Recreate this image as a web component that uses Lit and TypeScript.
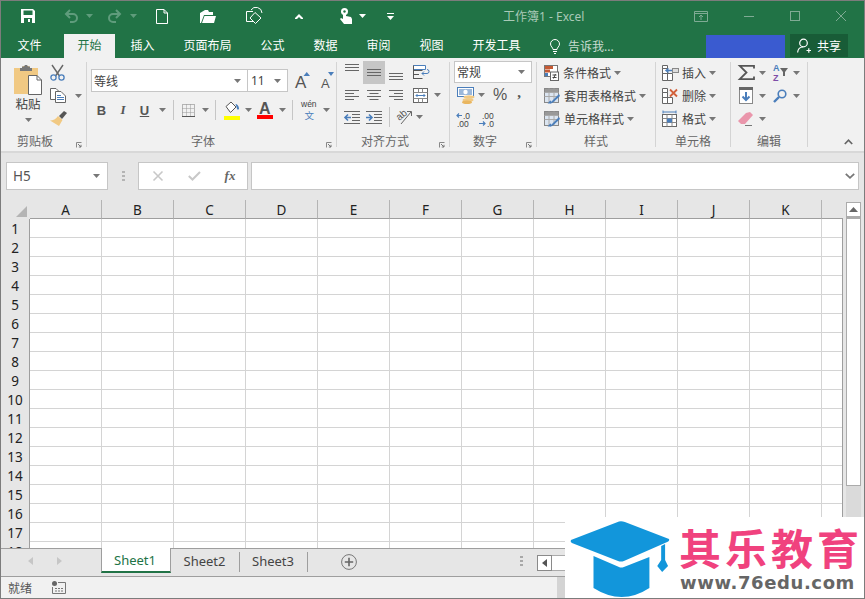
import { LitElement, html, css, svg } from "lit";
import { customElement } from "lit/decorators.js";

const ic = (w: number, h: number, body: unknown) =>
  html`<svg class="ic" width=${w} height=${h} viewBox="0 0 ${w} ${h}">${body}</svg>`;
const caret = (c = "#777") => ic(7, 4, svg`<polygon points="0,0 7,0 3.5,4" fill=${c}/>`);
const BL = "#4a7ebb";
const ln = (x1: number, y: number, x2: number, c = "#666") =>
  svg`<line x1=${x1} y1=${y} x2=${x2} y2=${y} stroke=${c} stroke-width="1"/>`;
const sp = html`<span></span>`;
const sep = html`<b class="vsep"></b>`;
const DIM = "#5f9c7c";

const I = {
  save: ic(14, 14, svg`<path d="M0 0H12L14 2V14H0Z" fill="#fff"/><rect x="2.5" y="1.5" width="9" height="4.5" fill="#217346"/><rect x="3" y="9" width="8" height="5" fill="#217346"/><rect x="7" y="10" width="2" height="3" fill="#fff"/>`),
  undo: ic(14, 14, svg`<path d="M6 1 L2 5 L6 9 M2 5 H9 A4 4 0 0 1 9 13 H6" fill="none" stroke=${DIM} stroke-width="2"/>`),
  redo: ic(14, 14, svg`<path d="M8 1 L12 5 L8 9 M12 5 H5 A4 4 0 0 0 5 13 H8" fill="none" stroke=${DIM} stroke-width="2"/>`),
  doc: ic(12, 15, svg`<path d="M.5 .5H8L11.5 4V14.5H.5Z M8 .5V4H11.5" fill="none" stroke="#fff"/>`),
  open: ic(16, 13, svg`<path d="M0 3 L5 0 H8 L9 2 H13 V5 H4 L1 13 H0Z" fill="#fff"/><path d="M4.5 6 H16 L14 13 H2Z" fill="#fff"/>`),
  touchMode: ic(17, 15, svg`<path d="M7 12.5H.5V2.5H7 M5 1 A6 6 0 0 1 16 4" fill="none" stroke="#fff"/><path d="M9 3.5 L15 9 L9.5 14.5 L4 9Z" fill="none" stroke="#fff"/>`),
  up: ic(8, 5, svg`<polygon points="4,0 8,4 8,5 6,5 4,3 2,5 0,5 0,4" fill="#fff"/>`),
  hand: ic(12, 16, svg`<circle cx="4.5" cy="3.5" r="3.5" fill="#fff"/><path d="M3 3 H6 V8 L11 9 L12 11 V16 H4 L0 11 L1 10 L3 11Z" fill="#fff"/><circle cx="4.5" cy="3.5" r="1.2" fill="#217346"/>`),
  more: ic(7, 7, svg`<rect width="7" height="1" fill="#fff"/><polygon points="0,3 7,3 3.5,7" fill="#fff"/>`),
  rest: ic(14, 11, svg`<path d="M.5 .5H13.5V10.5H.5Z M.5 2.5H13.5 M7 9V4 M5 6L7 4L9 6" fill="none" stroke="#7fab94"/>`),
  min: ic(10, 10, svg`<line x1="0" y1="5.5" x2="10" y2="5.5" stroke="#7fab94"/>`),
  max: ic(10, 10, svg`<rect x=".5" y=".5" width="9" height="9" fill="none" stroke="#7fab94"/>`),
  close: ic(10, 10, svg`<path d="M0 0L10 10M10 0L0 10" stroke="#7fab94"/>`),
  bulb: ic(10, 15, svg`<path d="M3 10.5C3 8.5 .5 7.5 .5 5A4.5 4.5 0 0 1 9.5 5C9.5 7.5 7 8.5 7 10.5Z M3 12.5H7 M4 14.5H6" fill="none" stroke="#fff"/>`),
  person: ic(14, 15, svg`<circle cx="6.5" cy="5" r="3.8" fill="none" stroke="#fff" stroke-width="1.2"/><path d="M.6 14.5C1 10.5 3.5 9 6 9 M9.5 12.5H14 M11.8 10.2V14.8" fill="none" stroke="#fff" stroke-width="1.2"/>`),
  paste: ic(28, 30, svg`<path d="M0 3H8L9 1H15L16 3H24V29H0Z" fill="#f1c983"/><path d="M6 3H8V1.5H10L11 0H13L14 1.5H16V3H18V6H6Z" fill="#777"/><path d="M14.5 10.5H23L27.5 15V29.5H14.5Z" fill="#fff" stroke="#666"/><path d="M23 10.5V15H27.5" fill="none" stroke="#666"/>`),
  cut: ic(15, 16, svg`<path d="M2 0L9.5 11 M13 0L5.5 11" stroke="#666" stroke-width="1.4"/><circle cx="3.5" cy="12.5" r="2.6" fill="none" stroke=${BL} stroke-width="1.3"/><circle cx="11.5" cy="12.5" r="2.6" fill="none" stroke=${BL} stroke-width="1.3"/>`),
  copy: ic(16, 15, svg`<path d="M.5 .5H6L8.5 3V11.5H.5Z" fill="#fff" stroke="#666"/><path d="M5.5 3.5H11L15.5 8V14.5H5.5Z" fill="#fff" stroke="#666"/><path d="M7 7.5H11 M7 9.5H14 M7 11.5H14" stroke=${BL}/>`),
  brush: ic(17, 15, svg`<path d="M9 5L14 0L17 2L12 8Z" fill="#555"/><path d="M8 5L12.5 9L9 15L0 9.5C3 9.5 6 8 8 5Z" fill="#f1c983"/>`),
  launcher: ic(6, 6, svg`<path d="M.5 5.5V.5H5.5" fill="none" stroke="#888"/><path d="M2 2L5 5M5 2.8V5H2.8" fill="none" stroke="#777"/>`),
  incA: html`<svg class="ic" width="16" height="18" viewBox="0 0 16 18"><text x="0" y="16" class="fa big">A</text><polygon points="8.5,4 15,4 11.75,0" fill=${BL}/></svg>`,
  decA: html`<svg class="ic" width="14" height="18" viewBox="0 0 14 18"><text x="0" y="16" class="fa small">A</text><polygon points="7,0 13,0 10,4" fill=${BL}/></svg>`,
  border: ic(13, 13, svg`<rect x=".5" y=".5" width="12" height="12" fill="none" stroke="#777" stroke-dasharray="1 1"/><path d="M.5 4.5H12.5M.5 8.5H12.5M4.5 .5V12.5M8.5 .5V12.5" stroke="#999" stroke-dasharray="1 1"/><line x1="0" y1="12.5" x2="13" y2="12.5" stroke="#555"/>`),
  fill: ic(16, 19, svg`<path d="M2 5.5L7 1L12 6L6.5 11.5Z" fill="#fff" stroke="#555"/><path d="M11.5 3C13 3 15 5 15 7.5C15 9 13 9 13 7.5Z" fill=${BL}/><rect y="15" width="16" height="4" fill="#ffff00"/>`),
  fontA: html`<svg class="ic" width="16" height="20" viewBox="0 0 16 20"><text x="2" y="14" class="fa big2">A</text><rect y="15" width="16" height="4" fill="#f00"/></svg>`,
  wen: html`<svg class="ic" width="16" height="18" viewBox="0 0 16 18"><text x="0" y="6" class="wen">wén</text><text x="3.5" y="17.5" class="wenz">文</text></svg>`,
  aTop: ic(14, 23, svg`${ln(0, 3.5, 14)}${ln(0, 6.5, 14)}${ln(0, 9.5, 14)}`),
  aMid: ic(14, 23, svg`${ln(0, 8.5, 14)}${ln(0, 11.5, 14)}${ln(0, 14.5, 14)}`),
  aBot: ic(14, 23, svg`${ln(0, 12.5, 14)}${ln(0, 15.5, 14)}${ln(0, 18.5, 14)}`),
  wrap: ic(17, 15, svg`<path d="M.5 .5H12.5V4.5H.5Z" fill="#fff" stroke=${BL}/><path d="M.5 5.5H9.5 M.5 9.5H6 M.5 13.5H9.5 M.5 .5V14" fill="none" stroke="#555"/><path d="M9 8.5H14A2 2 0 0 0 14 4.5 M11 6.5L9 8.5L11 10.5" fill="none" stroke=${BL}/>`),
  left: ic(14, 11, svg`${ln(0, .5, 14)}${ln(0, 3.5, 9)}${ln(0, 6.5, 14)}${ln(0, 9.5, 9)}`),
  center: ic(14, 11, svg`${ln(0, .5, 14)}${ln(2.5, 3.5, 11.5)}${ln(0, 6.5, 14)}${ln(2.5, 9.5, 11.5)}`),
  right: ic(14, 11, svg`${ln(0, .5, 14)}${ln(5, 3.5, 14)}${ln(0, 6.5, 14)}${ln(5, 9.5, 14)}`),
  merge: ic(15, 15, svg`<rect x=".5" y=".5" width="14" height="14" fill="#fff" stroke="#666"/><path d="M.5 4.5H14.5M.5 10.5H14.5" stroke="#888"/><path d="M5.5 .5V4.5M9.5 .5V4.5M5.5 10.5V14.5M9.5 10.5V14.5" stroke="#888"/><path d="M3 7.5H12M4.5 6L3 7.5L4.5 9M10.5 6L12 7.5L10.5 9" fill="none" stroke=${BL}/>`),
  indDec: ic(16, 13, svg`${ln(0, .5, 16)}${ln(8, 3.5, 16)}${ln(8, 6.5, 16)}${ln(8, 9.5, 16)}${ln(0, 12.5, 16)}<path d="M1 6.5H7 M4 3.5L1 6.5L4 9.5" fill="none" stroke=${BL} stroke-width="1.6"/>`),
  indInc: ic(16, 13, svg`${ln(0, .5, 16)}${ln(8, 3.5, 16)}${ln(8, 6.5, 16)}${ln(8, 9.5, 16)}${ln(0, 12.5, 16)}<path d="M0 6.5H6 M3 3.5L6 6.5L3 9.5" fill="none" stroke=${BL} stroke-width="1.6"/>`),
  orient: html`<svg class="ic" width="17" height="16" viewBox="0 0 17 16"><text x="1" y="10" class="orient" transform="rotate(-40 5 8)">ab</text><path d="M5 15L15 3M11 2.5H15.5V7" fill="none" stroke="#666"/></svg>`,
  currency: ic(18, 17, svg`<rect x=".5" y=".5" width="16" height="9" fill="#fff" stroke=${BL} stroke-width="1"/><rect x="2" y="2" width="13" height="6" fill=${BL} opacity=".55"/><circle cx="8.5" cy="5" r="2.2" fill="#fff"/><ellipse cx="12" cy="10" rx="5.5" ry="1.8" fill="#f1c983"/><ellipse cx="11" cy="13" rx="5.5" ry="1.8" fill="#f1c983"/><ellipse cx="10" cy="15.2" rx="5" ry="1.8" fill="#e9b660"/>`),
  decInc: html`<svg class="ic" width="16" height="15" viewBox="0 0 16 15"><text x="6" y="6.5" class="num">.0</text><text x="0" y="15" class="num">.00</text><path d="M0 3.5H5M2 1.5L0 3.5L2 5.5" fill="none" stroke=${BL} stroke-width="1.2"/></svg>`,
  decDec: html`<svg class="ic" width="16" height="15" viewBox="0 0 16 15"><text x="3" y="6.5" class="num">.00</text><text x="8" y="15" class="num">.0</text><path d="M0 11.5H6M4 9.5L6 11.5L4 13.5" fill="none" stroke=${BL} stroke-width="1.2"/></svg>`,
  cond: ic(15, 16, svg`<rect x=".5" y=".5" width="13" height="11" fill="#fff" stroke="#777"/><rect x="1" y="1" width="8" height="3" fill="#c55a34"/><rect x="1" y="4.5" width="5" height="3" fill="#c55a34"/><rect x="1" y="8" width="3" height="3" fill="#4a7ebb"/><rect x="6.5" y="7" width="8" height="8.5" fill="#fff" stroke="#666"/><path d="M8.5 10H12.5M8.5 12.5H12.5M11.5 9L9.5 13.5" stroke="#444"/>`),
  tablef: ic(16, 16, svg`<rect x=".5" y=".5" width="14" height="14" fill="#dbe5f1" stroke="#888"/><path d="M.5 4.5H14.5M.5 8.5H14.5M5 .5V14.5M10 .5V14.5" stroke="#aaa"/><rect x="1" y="1" width="13" height="3" fill="#999"/><path d="M15 6L8 13L6 15.5L9 14.5L16 8Z" fill=${BL}/><path d="M7 12.5C5 12.5 5 15 3.5 15.5H7.5Z" fill=${BL}/>`),
  cins: ic(17, 16, svg`<path d="M.5 3.5H5.5V8.5H.5Z M.5 8.5H5.5V15.5H.5Z M5.5 8.5H10.5V15.5H5.5Z M.5 .5H5.5V3.5H.5Z" fill="#fff" stroke="#666"/><rect x="10.5" y="3.5" width="6" height="4" fill="#ddd" stroke="#888"/><path d="M4 5.5H10M6.5 3.5L4 5.5L6.5 7.5" fill="none" stroke=${BL} stroke-width="1.4"/>`),
  cdel: ic(17, 16, svg`<path d="M.5 .5H5.5V4.5H.5Z M.5 4.5H5.5V9.5H.5Z M.5 9.5H5.5V15.5H.5Z M5.5 9.5H10.5V15.5H5.5Z" fill="#fff" stroke="#666"/><path d="M8 1.5L15 8.5M15 1.5L8 8.5" stroke="#d2603a" stroke-width="1.8"/>`),
  cfmt: ic(17, 17, svg`<rect x=".5" y="4.5" width="14" height="12" fill="#fff" stroke="#666"/><path d="M.5 8.5H14.5M.5 12.5H14.5M5 4.5V16.5M10 4.5V16.5" stroke="#888"/><rect x="5" y="8.5" width="5" height="4" fill=${BL}/><path d="M1 2H14M1 .5V3.5M14 .5V3.5" fill="none" stroke=${BL}/>`),
  sum: ic(15, 15, svg`<path d="M15 3.5V.8H.8L7.5 7.5L.8 14.2H15V11.5" fill="none" stroke="#555" stroke-width="1.8"/>`),
  sort: html`<svg class="ic" width="15" height="17" viewBox="0 0 15 17"><text x="0" y="7" class="az az1">A</text><text x="0" y="17" class="az az2">Z</text><polygon points="7,4 15,4 12,8 12,12 10,12 10,8" fill="#666"/></svg>`,
  down: ic(14, 17, svg`<rect x=".5" y=".5" width="13" height="16" fill="#fff" stroke="#888"/><rect width="14" height="3" fill="#666"/><path d="M7 5V13M3.5 9.5L7 13L10.5 9.5" fill="none" stroke=${BL} stroke-width="2"/>`),
  find: ic(14, 14, svg`<circle cx="9" cy="5" r="3.8" fill="none" stroke=${BL} stroke-width="1.6"/><line x1="6" y1="8" x2="1" y2="13" stroke=${BL} stroke-width="2.4"/>`),
  eraser: ic(17, 14, svg`<path d="M0 9L8 1L12 0L15 3L7 12H3Z" fill="#ea96ab"/><line x1="7" y1="13.5" x2="14" y2="13.5" stroke="#777"/>`),
  collapse: ic(9, 6, svg`<path d="M.8 5L4.5 1.2L8.2 5" fill="none" stroke="#666" stroke-width="1.7"/>`),
  cx: ic(10, 10, svg`<path d="M.5 .5L9.5 9.5M9.5 .5L.5 9.5" stroke="#c8c8c8" stroke-width="1.6"/>`),
  ck: ic(13, 10, svg`<path d="M.8 5L4.5 8.5L12 1" fill="none" stroke="#c8c8c8" stroke-width="2"/>`),
  chev: ic(10, 6, svg`<path d="M.8 .8L5 4.8L9.2 .8" fill="none" stroke="#777" stroke-width="1.8"/>`),
  navL: ic(5, 8, svg`<polygon points="5,0 5,8 0,4" fill="#c6c6c6"/>`),
  navR: ic(5, 8, svg`<polygon points="0,0 0,8 5,4" fill="#c6c6c6"/>`),
  plus: ic(16, 16, svg`<circle cx="8" cy="8" r="7.4" fill="none" stroke="#777"/><path d="M8 3.8V12.2M3.8 8H12.2" stroke="#666" stroke-width="1.6"/>`),
  status: ic(14, 13, svg`<circle cx="2.5" cy="2.5" r="2.5" fill="#666"/><path d="M6 1.5H13.5V12.5H.5V6" fill="none" stroke="#777"/><path d="M3 7.5H12M3 10H12" stroke="#777" stroke-dasharray="2 1"/>`),
  tri: ic(5, 8, svg`<polygon points="5,0 5,8 0,4" fill="#555"/>`),
  triUp: ic(9, 5, svg`<polygon points="0,5 9,5 4.5,0" fill="#666"/>`),
  corner: ic(12, 12, svg`<polygon points="12,1 12,12 1,12" fill="#b4b4b4"/>`),
  hat: html`<svg class="ic" width="102" height="79" viewBox="0 0 104 79" preserveAspectRatio="none"><path d="M3 23L52 4.5Q55 4 58 5L103 22Q104 24 100 25.5L57 44Q54 45 51 44L4 26Q2 25 3 23Z" fill="#1296db"/><path d="M26 39L52 50Q54 51 57 50L83 40V71Q55 89 26 71Z" fill="#1296db"/><path d="M97 28L99 27V43L102 49L96 55L91 49L95 43V29Z" fill="#1296db"/></svg>`,
};

const COLS = ["A", "B", "C", "D", "E", "F", "G", "H", "I", "J", "K"];
const ROWS = Array.from({ length: 18 }, (_, i) => i + 1);
const CELLCOLS = Array.from({ length: 12 }, (_, i) => i);

@customElement("app-root")
export class AppRoot extends LitElement {
  static styles = css`
    :host { display: block; width: 865px; height: 599px; box-sizing: border-box; border: 1px solid #7c7c7c; overflow: hidden; position: relative;
      font-family: "Noto Sans", "Noto Sans CJK SC", sans-serif; font-size: 12px; color: #444; background: #e6e6e6; }
    * { box-sizing: border-box; }
    .app { display: flex; flex-direction: column; height: 100%; }
    .ic { display: block; flex: none; overflow: visible; }
    .title { display: flex; align-items: center; height: 33px; padding-bottom: 3px; background: #217346; flex: none; }
    .qat { display: grid; align-items: center; grid-template-columns: 20px 14px 29px 14px 8px 7px 15px 14px 8px 7px 19px 12px 32px 16px 30px 17px 32px 8px 37px 12px 7px 7px 21px 7px; }
    .doctitle { margin-left: 109px; color: #a9c9b7; font-size: 12px; white-space: pre; }
    .win { margin-left: auto; display: flex; align-items: center; gap: 36px; padding-right: 18px; }
    .tabs { display: flex; height: 24px; background: #217346; flex: none; padding-left: 3px; color: #fff; }
    .tab { width: 51px; text-align: center; line-height: 23px; flex: none; margin-right: 2px; }
    .tab.w { width: 75px; }
    .tab.file { margin-right: 9px; }
    .tab.on { background: #f1f1f1; color: #217346; }
    .help { display: flex; align-items: center; gap: 8px; margin-left: 14px; color: #c8dcd1; }
    .acct { margin-left: auto; width: 79px; height: 23px; align-self: flex-end; background: #3a5bd0; }
    .share { display: flex; align-items: center; gap: 6px; width: 58px; height: 23px; margin: 0 16px 0 5px; padding-left: 7px; background: #185c37; color: #fff; }
    .ribbon { display: flex; height: 95px; flex: none; background: #f1f1f1; border-bottom: 2px solid #d8d8d8; }
    .g { display: flex; flex-direction: column; flex: none; height: 93px; position: relative; }
    .g::after { content: ""; position: absolute; right: 0; top: 4px; bottom: 4px; width: 1px; background: #d4d4d4; }
    .gb { height: 75px; flex: none; }
    .gl { height: 18px; display: flex; align-items: center; color: #666; line-height: 16px; }
    .gl .ic { margin-left: auto; margin-right: 5px; margin-top: 5px; }
    .g1 { width: 86px; } .g1 .gl { padding-left: 16px; }
    .g2 { width: 250px; } .g2 .gl { padding-left: 104px; }
    .g3 { width: 113px; } .g3 .gl { padding-left: 24px; }
    .g4 { width: 87px; } .g4 .gl { padding-left: 23px; }
    .g5 { width: 119px; } .g5 .gl { padding-left: 47px; }
    .g6 { width: 75px; } .g6 .gl { padding-left: 19px; }
    .g7 { width: 77px; } .g7 .gl { padding-left: 26px; }
    .rest { flex: 1; display: flex; justify-content: flex-end; align-items: flex-end; padding: 0 11px 6px 0; }
    .clip { display: flex; }
    .pastebtn { margin: 7px 0 0 13px; width: 28px; display: flex; flex-direction: column; align-items: center; }
    .pastebtn span { margin-top: 1px; line-height: 18px; font-size: 12.5px; color: #444; white-space: nowrap; }
    .pastebtn .ic:last-child { margin-top: 4px; }
    .clipcol { margin: 3px 0 0 8px; }
    .r23 { height: 23px; display: flex; align-items: center; }
    .r23 .ic + .ic { margin-left: 2px; }
    .copyr { gap: 1px; }
    .copyr .ic + .ic { margin-left: 8px; }
    .combo { background: #fff; border: 1px solid #c6c6c6; display: flex; align-items: center; justify-content: space-between; color: #444; }
    .fontr1 { display: flex; align-items: center; margin: 11px 0 0 4px; }
    .fname { width: 157px; height: 23px; padding: 0 6px 0 2px; }
    .fsize { width: 40px; height: 23px; margin-left: 0; padding: 0 6px 0 3px; border-left: 0; }
    .grow { margin-left: 7px; } .shrink { margin-left: 10px; }
    .fontr2 { display: grid; grid-template-columns: 21px 22px 21px 14px 8px 22px 12px 9px 23px 10px 24px 11px 9px 23px 12px; justify-items: center; align-items: center; margin: 7px 0 0 4px; height: 22px; }
    .vsep { width: 1px; height: 20px; background: #c6c6c6; display: block; }
    .bt { font: 700 13px "Liberation Sans", sans-serif; color: #555; }
    .it { font: italic 700 13px "Liberation Serif", serif; color: #555; }
    .un { font: 700 13px "Liberation Sans", sans-serif; color: #555; text-decoration: underline; }
    .fa { font-family: "Liberation Sans", sans-serif; fill: #555; }
    .big { font-size: 17px; } .small { font-size: 13px; } .big2 { font-size: 16px; font-weight: 700; }
    .wen { font: 8.5px "Liberation Sans", sans-serif; fill: #444; }
    .wenz { font: 9.5px "Noto Sans CJK SC", sans-serif; fill: #4a7ebb; }
    .orient { font: 10px "Liberation Sans", sans-serif; fill: #555; }
    .num { font: 8.5px "Liberation Sans", sans-serif; fill: #444; }
    .az { font: 700 9px "Liberation Sans", sans-serif; }
    .az1 { fill: #4a7ebb; } .az2 { fill: #7e4ea8; }
    .alr1 { display: grid; grid-template-columns: 22px 22px 22px 29px; justify-items: center; align-items: center; height: 23px; margin: 3px 0 0 4px; }
    .alr2 { display: grid; grid-template-columns: 22px 22px 22px 27px 7px; justify-items: center; align-items: center; height: 22px; margin: 0 0 0 4px; }
    .alr3 { display: grid; grid-template-columns: 22px 22px 8px 22px 8px; justify-items: center; align-items: center; height: 22px; margin: 0 0 0 4px; }
    .alon { background: #c6c6c6; width: 22px; height: 23px; display: flex; justify-content: center; }
    .nfmt { width: 78px; height: 22px; margin: 3px 0 0 4px; padding: 0 6px 0 2px; }
    .nr2 { display: grid; grid-template-columns: 24px 6px 32px 6px; justify-items: center; align-items: center; height: 24px; margin: 0 0 0 4px; }
    .nr3 { display: grid; grid-template-columns: 22px 22px; justify-items: center; align-items: center; height: 22px; margin: 1px 0 0 4px; }
    .pct { font: 16px "Liberation Sans", sans-serif; color: #555; }
    .cma { font: 700 15px "Liberation Serif", serif; color: #555; line-height: 12px; margin-bottom: 6px; }
    .list { padding: 3px 0 0 7px; }
    .list .r23 { gap: 4px; white-space: nowrap; }
    .list .r23 .ic + .ic { margin-left: 0; }
    .list .r23 span { margin-right: -1px; }
    .cells { padding: 3px 0 0 6px; }
    .cells .r23 { gap: 3px; }
    .cells .r23 .ic + .ic { margin-left: 6px; }
    .cells .r23.f .ic + .ic { margin-left: -1px; }
    .ed { display: grid; grid-template-columns: 16px 16px 20px 12px; justify-items: center; align-items: center; height: 23px; margin-left: 7px; }
    .edw { padding-top: 3px; }
    .fbar { height: 47px; flex: none; background: #e6e6e6; display: flex; align-items: flex-start; padding: 9px 0 0 5px; }
    .box { background: #fff; border: 1px solid #c6c6c6; height: 28px; display: flex; align-items: center; }
    .namebox { width: 102px; padding: 0 7px 0 6px; justify-content: space-between; font: 13.5px "Noto Sans", sans-serif; color: #555; }
    .dots { width: 3px; height: 10px; margin: 9px 13px 0 14px; background: repeating-linear-gradient(#b4b4b4 0 2px, transparent 2px 4px); flex: none; }
    .fx { width: 110px; display: grid; grid-template-columns: 37px 36px 36px; justify-items: center; align-items: center; }
    .fxt { font: italic 700 13px "Liberation Serif", serif; color: #666; }
    .finput { width: 608px; margin-left: 3px; justify-content: flex-end; padding-right: 3px; }
    .sheet { flex: 1; display: flex; min-height: 0; overflow: hidden; background: #e6e6e6; }
    .gridw { width: 842px; flex: none; display: flex; flex-direction: column; min-height: 0; }
    .ch { display: flex; height: 19px; flex: none; }
    .corner { width: 29px; flex: none; display: flex; align-items: flex-end; padding: 0 0 2px 14px; }
    .chc { width: 72px; flex: none; text-align: center; border-right: 1px solid #b4b4b4; border-bottom: 1px solid #9e9e9e; font: 13.5px/20px "Noto Sans", sans-serif; color: #222; }
    .chl { flex: 1; border-bottom: 1px solid #9e9e9e; }
    .gbody { flex: 1; min-height: 0; display: flex; overflow: hidden; border-right: 1px solid #9e9e9e; }
    .rh { width: 29px; flex: none; border-right: 1px solid #9e9e9e; }
    .rhc { height: 19px; text-align: center; font: 13.5px/21px "Noto Sans", sans-serif; color: #222; }
    .cellsgrid { flex: 1; display: grid; grid-template-columns: repeat(11, 72px) 1fr; grid-auto-rows: 19px; background: #fff; }
    .c { border-right: 1px solid #d4d4d4; border-bottom: 1px solid #d4d4d4; }
    .c:nth-child(12n) { border-right: 0; }
    .vs { flex: 1; padding: 2px 3px 0 3px; display: flex; }
    .vtrack { flex: 1; background: #dadada; display: flex; flex-direction: column; }
    .vup { height: 15px; background: #fff; border: 1px solid #ababab; display: flex; align-items: center; justify-content: center; flex: none; }
    .vth { height: 269px; background: #fff; border: 1px solid #ababab; border-top-width: 2px; flex: none; }
    .tabbar { height: 29px; flex: none; display: flex; background: #e6e6e6; border-top: 1px solid #9e9e9e; border-bottom: 1px solid #9e9e9e; }
    .nav { width: 100px; flex: none; display: flex; align-items: center; padding: 0 0 4px 27px; gap: 24px; }
    .stab { font: 13px/24px "Noto Sans", sans-serif; color: #444; height: 23px; flex: none; }
    .stab.on { width: 70px; padding-right: 2px; margin-top: -1px; height: 25px; background: #fff; color: #217346; text-align: center; border: 1px solid #9e9e9e; border-top: 0; border-bottom: 2px solid #217346; }
    .stab.o { width: 69px; padding-right: 2px; text-align: center; position: relative; }
    .stab.o.n { width: 68px; }
    .stab.o::after { content: ""; position: absolute; right: 0; top: 3px; bottom: 0; width: 1px; background: #9e9e9e; }
    .add { margin: 5px 0 0 33px; flex: none; }
    .hs { margin-left: auto; width: 344px; flex: none; display: flex; padding: 6px 0 0 0; }
    .hdots { width: 3px; height: 11px; margin-top: 1px; background: repeating-linear-gradient(#a8a8a8 0 2px, transparent 2px 4px); }
    .hbtn { width: 15px; height: 16px; margin-left: 14px; background: #fff; border: 1px solid #8a8a8a; display: flex; align-items: center; justify-content: center; }
    .hth { flex: 1; height: 16px; background: #fff; border: 1px solid #ababab; border-left: 0; }
    .status { height: 21px; flex: none; background: #f1f1f1; display: flex; align-items: center; padding-left: 7px; color: #555; }
    .status .ic { margin-left: 20px; }
    .stblock { margin-left: auto; width: 307px; height: 100%; background: #d4d4d4; }
    .wm { position: absolute; left: 564px; top: 516px; width: 300px; height: 82px; background: #fff; display: flex; padding-left: 3px; }
    .wmt { margin-left: 9px; display: flex; flex-direction: column; }
    .wm1 { font: 700 42px/48px "Noto Sans CJK SC", sans-serif; color: #f0427e; letter-spacing: 4px; white-space: nowrap; margin-top: 6px; height: 50px; }
    .wm2 { font: 700 18px/20px "DejaVu Sans", sans-serif; color: #666; letter-spacing: .6px; white-space: nowrap; margin-left: 1px; }
  `;

  private group(cls: string, label: string, launcher: boolean, body: unknown) {
    return html`<div class="g ${cls}"><div class="gb">${body}</div><div class="gl">${label}${launcher ? I.launcher : ""}</div></div>`;
  }

  render() {
    return html`<div class="app">
      <div class="title">
        <div class="qat">${sp}${I.save}${sp}${I.undo}${sp}${caret(DIM)}${sp}${I.redo}${sp}${caret(DIM)}${sp}${I.doc}${sp}${I.open}${sp}${I.touchMode}${sp}${I.up}${sp}${I.hand}${sp}${caret("#fff")}${sp}${I.more}</div>
        <div class="doctitle">工作簿1 - Excel</div>
        <div class="win">${I.rest}${I.min}${I.max}${I.close}</div>
      </div>
      <div class="tabs">
        <div class="tab file">文件</div><div class="tab on">开始</div><div class="tab">插入</div><div class="tab w">页面布局</div>
        <div class="tab">公式</div><div class="tab">数据</div><div class="tab">审阅</div><div class="tab">视图</div><div class="tab w">开发工具</div>
        <div class="help">${I.bulb}<span>告诉我...</span></div>
        <div class="acct"></div>
        <div class="share">${I.person}<span>共享</span></div>
      </div>
      <div class="ribbon">
        ${this.group("g1", "剪贴板", true, html`<div class="clip">
          <div class="pastebtn">${I.paste}<span>粘贴</span>${caret()}</div>
          <div class="clipcol"><div class="r23">${I.cut}</div><div class="r23 copyr">${I.copy}${caret()}</div><div class="r23">${I.brush}</div></div>
        </div>`)}
        ${this.group("g2", "字体", true, html`
          <div class="fontr1">
            <div class="combo fname"><span>等线</span>${caret()}</div>
            <div class="combo fsize"><span>11</span>${caret()}</div>
            <span class="grow">${I.incA}</span><span class="shrink">${I.decA}</span>
          </div>
          <div class="fontr2">
            <span class="bt">B</span><span class="it">I</span><span class="un">U</span>${caret()}${sep}${I.border}${caret()}${sep}${I.fill}${caret()}${I.fontA}${caret()}${sep}${I.wen}${caret()}
          </div>`)}
        ${this.group("g3", "对齐方式", true, html`
          <div class="alr1">${I.aTop}<div class="alon">${I.aMid}</div>${I.aBot}${I.wrap}</div>
          <div class="alr2">${I.left}${I.center}${I.right}${I.merge}${caret()}</div>
          <div class="alr3">${I.indDec}${I.indInc}${sep}${I.orient}${caret()}</div>`)}
        ${this.group("g4", "数字", true, html`
          <div class="combo nfmt"><span>常规</span>${caret()}</div>
          <div class="nr2">${I.currency}${caret()}<span class="pct">%</span><span class="cma">,</span></div>
          <div class="nr3">${I.decInc}${I.decDec}</div>`)}
        ${this.group("g5", "样式", false, html`<div class="list">
          <div class="r23">${I.cond}<span>条件格式</span>${caret()}</div>
          <div class="r23">${I.tablef}<span>套用表格格式</span>${caret()}</div>
          <div class="r23">${I.tablef}<span>单元格样式</span>${caret()}</div>
        </div>`)}
        ${this.group("g6", "单元格", false, html`<div class="cells">
          <div class="r23">${I.cins}<span>插入</span>${caret()}</div>
          <div class="r23">${I.cdel}<span>删除</span>${caret()}</div>
          <div class="r23 f">${I.cfmt}<span>格式</span>${caret()}</div>
        </div>`)}
        ${this.group("g7", "编辑", false, html`<div class="edw">
          <div class="ed">${I.sum}${caret()}${I.sort}${caret()}</div>
          <div class="ed">${I.down}${caret()}${I.find}${caret()}</div>
          <div class="ed">${I.eraser}${caret()}</div>
        </div>`)}
        <div class="rest">${I.collapse}</div>
      </div>
      <div class="fbar">
        <div class="box namebox"><span>H5</span>${caret("#777")}</div>
        <div class="dots"></div>
        <div class="box fx">${I.cx}${I.ck}<span class="fxt">fx</span></div>
        <div class="box finput">${I.chev}</div>
      </div>
      <div class="sheet">
        <div class="gridw">
          <div class="ch">
            <div class="corner">${I.corner}</div>
            ${COLS.map((c) => html`<div class="chc">${c}</div>`)}
            <div class="chl"></div>
          </div>
          <div class="gbody">
            <div class="rh">${ROWS.map((r) => html`<div class="rhc">${r}</div>`)}</div>
            <div class="cellsgrid">${ROWS.map(() => CELLCOLS.map(() => html`<div class="c"></div>`))}</div>
          </div>
        </div>
        <div class="vs"><div class="vtrack"><div class="vup">${I.triUp}</div><div class="vth"></div></div></div>
      </div>
      <div class="tabbar">
        <div class="nav">${I.navL}${I.navR}</div>
        <div class="stab on">Sheet1</div>
        <div class="stab o">Sheet2</div>
        <div class="stab o n">Sheet3</div>
        <div class="add">${I.plus}</div>
        <div class="hs"><div class="hdots"></div><div class="hbtn">${I.tri}</div><div class="hth"></div></div>
      </div>
      <div class="status"><span>就绪</span>${I.status}<div class="stblock"></div></div>
    </div>
    <div class="wm">${I.hat}<div class="wmt"><div class="wm1">其乐教育</div><div class="wm2">www.76edu.com</div></div></div>`;
  }
}
